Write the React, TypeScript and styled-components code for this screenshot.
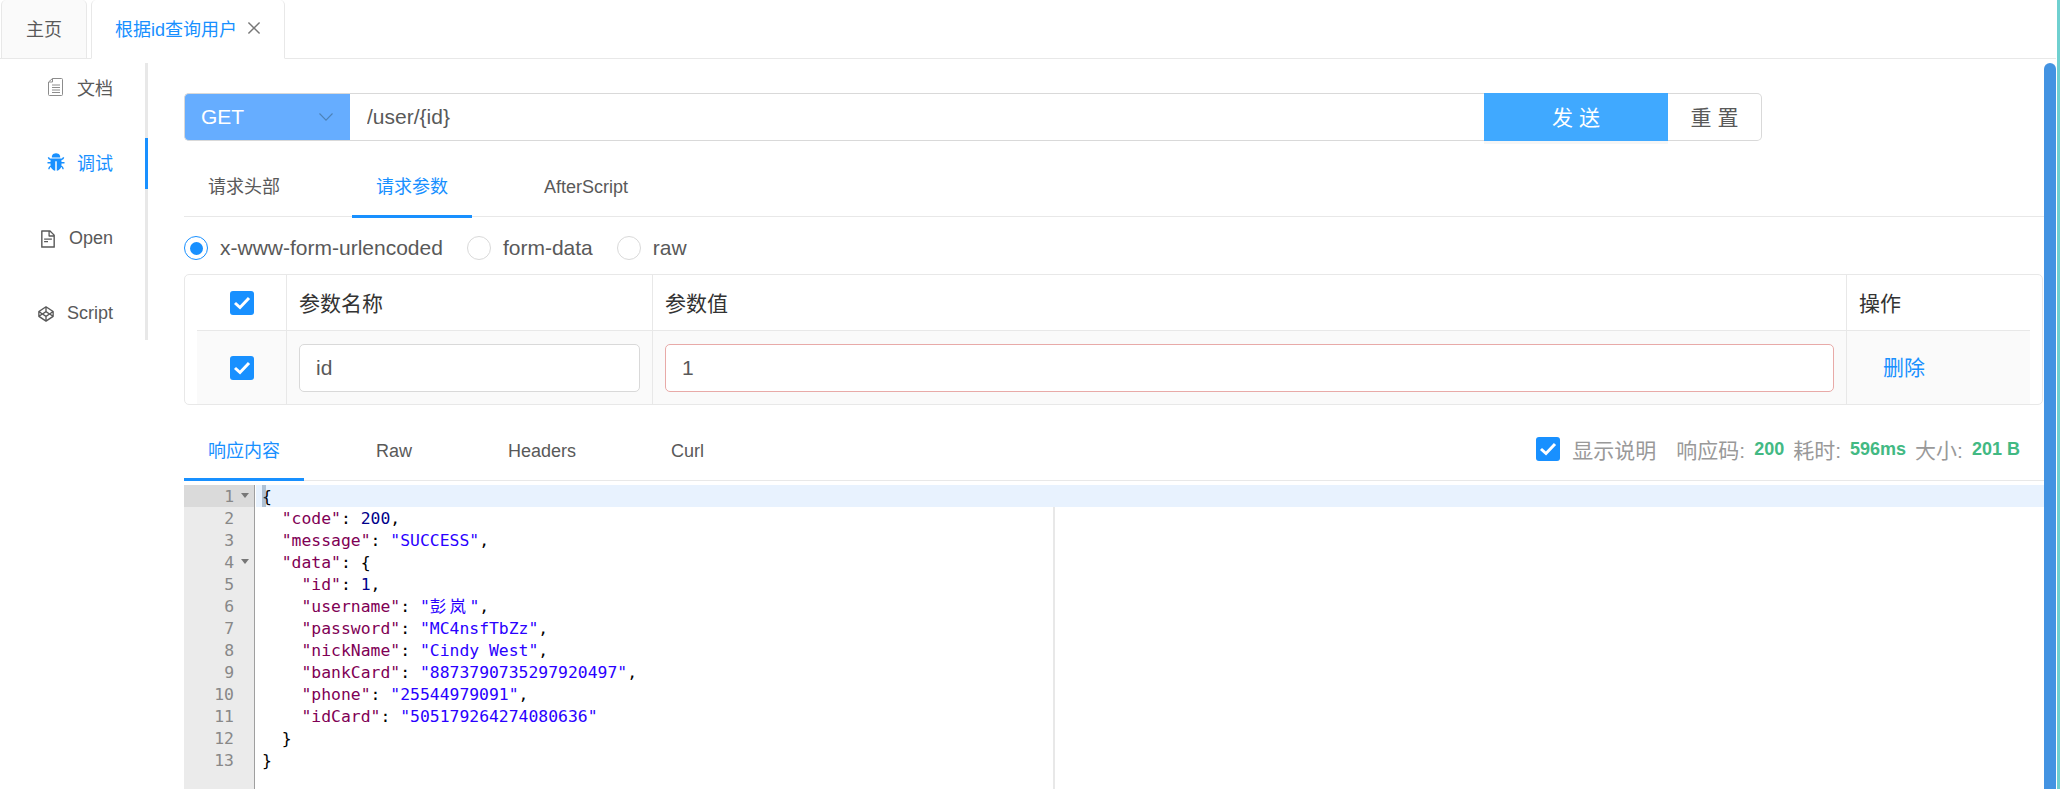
import React from 'react';
import styled, { createGlobalStyle } from 'styled-components';
import {
  AiFillBug, AiOutlineClose, AiOutlineCodepen, AiOutlineFileText,
} from 'react-icons/ai';

const GlobalStyle = createGlobalStyle`
  html, body {
    margin: 0;
    padding: 0;
    height: 100%;
    overflow: hidden;
    background: #fff;
  }
  * { box-sizing: border-box; }
  body {
    font-family: "Liberation Sans", Arial, "Noto Sans CJK SC", sans-serif;
    color: #595959;
  }
`;

const Frame = styled.div`
  display: flex;
  height: 789px;
  overflow: hidden;
`;

const EdgeStrip = styled.div`
  flex: none;
  width: 3px;
  margin-left: 1px;
  background: #6fd0d0;
`;

const Page = styled.div`
  display: flex;
  flex: 1;
  flex-direction: column;
  min-width: 0;
`;

const TabBar = styled.div`
  display: flex;
  flex: none;
  gap: 4px;
  height: 59px;
  padding-left: 1px;
  border-bottom: 1px solid #e8e8e8;
`;

const PageTab = styled.div<{ $active?: boolean }>`
  display: flex;
  align-items: center;
  gap: 8px;
  height: 59px;
  padding: ${(p) => (p.$active ? '0 21px 2px 23px' : '0 24px 2px 24px')};
  font-size: 18px;
  color: ${(p) => (p.$active ? '#1890ff' : '#595959')};
  background: ${(p) => (p.$active ? '#fff' : '#fafafa')};
  border: 1px solid #e8e8e8;
  border-top: 0;
  border-bottom-color: ${(p) => (p.$active ? '#fff' : '#e8e8e8')};
  border-radius: 5px 5px 0 0;
  svg { color: #777; font-size: 18px; }
`;

const Body = styled.div`
  display: flex;
  flex: 1;
  min-height: 0;
`;

const Sidebar = styled.nav`
  flex: none;
  align-self: flex-start;
  width: 148px;
  height: 277px;
  margin-top: 4px;
  margin-right: 36px;
  border-right: 3px solid #e8e8e8;
`;

const SideItem = styled.div<{ $active?: boolean; $lift?: number }>`
  display: flex;
  align-items: center;
  justify-content: flex-end;
  gap: 11px;
  height: 51px;
  margin: 0 -3px 24px 0;
  padding: 0 32px ${(p) => p.$lift ?? 0}px 0;
  font-size: 18px;
  color: ${(p) => (p.$active ? '#1890ff' : '#595959')};
  border-right: 3px solid ${(p) => (p.$active ? '#1890ff' : 'transparent')};
  svg { flex: none; font-size: 20px; }
`;

const DocGlyph = styled.svg`
  margin-right: 3px;
`;

const Main = styled.main`
  flex: 1;
  min-width: 0;
  padding-top: 34px;
`;

const UrlBar = styled.div`
  display: flex;
  height: 48px;
  width: 1578px;
`;

const MethodSelect = styled.div`
  display: flex;
  flex: none;
  align-items: center;
  justify-content: space-between;
  width: 166px;
  padding: 0 17px 0 16px;
  font-size: 21px;
  color: #fff;
  background: #66adff;
  border: 1px solid #d9d9d9;
  border-right: 0;
  border-radius: 5px 0 0 5px;
`;

const UrlInput = styled.input`
  flex: 1;
  min-width: 0;
  padding: 0 17px;
  font: inherit;
  font-size: 21px;
  color: #595959;
  border: 1px solid #d9d9d9;
  border-left: 0;
  border-right: 0;
  outline: none;
`;

const SendButton = styled.button`
  flex: none;
  width: 184px;
  padding: 0 0 2px;
  font: inherit;
  font-size: 21px;
  color: #fff;
  background: #40a9ff;
  border: 0;
  box-shadow: 0 3px 0 rgba(0, 0, 0, 0.035);
`;

const ResetButton = styled.button`
  flex: none;
  width: 94px;
  padding: 0 0 2px;
  font: inherit;
  font-size: 21px;
  color: #595959;
  background: #fff;
  border: 1px solid #d9d9d9;
  border-left: 0;
  border-radius: 0 5px 5px 0;
`;

const TabStrip = styled.div`
  display: flex;
  height: 76px;
  align-items: flex-end;
  border-bottom: 1px solid #e8e8e8;
`;

const StripTab = styled.div<{ $active?: boolean; $width: number; $pad?: number; $below?: number }>`
  flex: none;
  width: ${(p) => p.$width}px;
  margin-bottom: -2px;
  padding: 0 0 ${(p) => p.$below ?? 17}px ${(p) => p.$pad ?? 24}px;
  font-size: 18px;
  line-height: 22px;
  white-space: nowrap;
  color: ${(p) => (p.$active ? '#1890ff' : '#595959')};
  border-bottom: 3px solid ${(p) => (p.$active ? '#1890ff' : 'transparent')};
`;

const RadioRow = styled.div`
  display: flex;
  align-items: center;
  gap: 24px;
  height: 57px;
  padding-top: 5px;
  font-size: 21px;
`;

const RadioOption = styled.label`
  display: flex;
  align-items: center;
  gap: 12px;
`;

const RadioMark = styled.span<{ $checked?: boolean }>`
  display: flex;
  align-items: center;
  justify-content: center;
  width: 24px;
  height: 24px;
  background: #fff;
  border: 1px solid ${(p) => (p.$checked ? '#1890ff' : '#d9d9d9')};
  border-radius: 50%;
  &::after {
    content: '';
    display: ${(p) => (p.$checked ? 'block' : 'none')};
    width: 13px;
    height: 13px;
    background: #1890ff;
    border-radius: 50%;
  }
`;

const ParamTable = styled.div`
  width: 1859px;
  height: 131px;
  padding: 0 12px;
  border: 1px solid #e8e8e8;
  border-radius: 5px;
`;

const TableRow = styled.div<{ $body?: boolean }>`
  display: grid;
  grid-template-columns: 90px 366px 1194px 1fr;
  height: ${(p) => (p.$body ? '73px' : '56px')};
  background: ${(p) => (p.$body ? '#fafafa' : '#fff')};
  border-bottom: ${(p) => (p.$body ? '0' : '1px solid #e8e8e8')};
`;

const Cell = styled.div<{ $center?: boolean }>`
  display: flex;
  align-items: center;
  justify-content: ${(p) => (p.$center ? 'center' : 'flex-start')};
  padding: 0 ${(p) => (p.$center ? '0' : '12px')};
  font-size: 21px;
  color: #333;
  border-right: 1px solid #e8e8e8;
  &:last-child { border-right: 0; }
`;

const HeadCell = styled(Cell)`
  padding-bottom: 2px;
`;

const CheckMark = styled.span`
  display: flex;
  flex: none;
  width: 24px;
  height: 24px;
  background: #1890ff;
  border-radius: 3px;
  svg { display: block; }
`;

const ParamInput = styled.input<{ $error?: boolean }>`
  width: 100%;
  height: 48px;
  padding: 0 16px;
  font: inherit;
  font-size: 21px;
  color: #595959;
  background: #fff;
  border: 1px solid ${(p) => (p.$error ? '#e8aaa8' : '#d9d9d9')};
  border-radius: 5px;
  outline: none;
`;

const DeleteLink = styled.a`
  margin: 0 0 3px 24px;
  font-size: 21px;
  color: #1890ff;
`;

const ResponseHead = styled.div`
  display: flex;
  justify-content: space-between;
  height: 76px;
  align-items: flex-end;
  border-bottom: 1px solid #e8e8e8;
`;

const ResponseTabs = styled.div`
  display: flex;
  margin-bottom: 1px;
`;

const ResponseMeta = styled.div`
  display: flex;
  align-items: center;
  height: 24px;
  margin-bottom: 19px;
  padding-right: 24px;
  font-size: 21px;
  color: #999;
`;

const MetaNote = styled.span`
  margin: 0 20px 0 12px;
`;

const MetaValue = styled.b`
  margin: 0 9px;
  font-size: 18px;
  color: #42b983;
  &:last-child { margin-right: 0; }
`;

const Editor = styled.div`
  display: flex;
  height: 304px;
  margin-top: 4px;
  font-family: "DejaVu Sans Mono", "Noto Sans CJK SC", monospace;
  font-size: 16.4px;
  line-height: 24px;
`;

const Gutter = styled.div`
  flex: none;
  width: 71px;
  margin-right: 1px;
  color: #888;
  background: #ebebeb;
  border-right: 1px solid #9f9f9f;
`;

const GutterLine = styled.div<{ $active?: boolean }>`
  position: relative;
  height: 22px;
  padding-right: 20px;
  text-align: right;
  background: ${(p) => (p.$active ? '#dadada' : 'transparent')};
`;

const FoldArrow = styled.span`
  position: absolute;
  top: 8px;
  right: 5px;
  border-top: 5px solid #777;
  border-left: 4px solid transparent;
  border-right: 4px solid transparent;
`;

const Code = styled.div`
  position: relative;
  flex: 1;
  min-width: 0;
  white-space: pre;
  color: #000;
`;

const CodeLine = styled.div<{ $active?: boolean }>`
  position: relative;
  height: 22px;
  padding-left: 6px;
  background: ${(p) => (p.$active ? '#e8f2fe' : 'transparent')};
`;

const Cursor = styled.span`
  position: absolute;
  top: 0;
  left: 6px;
  width: 4px;
  height: 22px;
  background: rgba(90, 120, 150, 0.4);
`;

const PrintMargin = styled.div`
  position: absolute;
  top: 0;
  bottom: 0;
  left: 797px;
  width: 2px;
  background: #e8e8e8;
`;

const Key = styled.span`
  color: #7f0055;
`;

const Str = styled.span`
  color: #2a00ff;
`;

const WideStr = styled.span`
  letter-spacing: 3.4px;
`;

const Num = styled.span`
  color: #00008b;
`;

const ScrollTrack = styled.div`
  flex: none;
  width: 12px;
  margin-top: 4px;
  background: #4393e2;
  border-radius: 6px 6px 0 0;
`;

const Check = () => (
  <CheckMark>
    <svg width="24" height="24" viewBox="0 0 24 24" fill="none">
      <path d="M5 12l5 4.5L19 7" stroke="#fff" strokeWidth="3" />
    </svg>
  </CheckMark>
);

const DocIcon = () => (
  <DocGlyph width="15" height="18" viewBox="0 0 15 18" fill="none" stroke="#8c8c8c" strokeWidth="1">
    <path d="M4.5 .5h9a1 1 0 0 1 1 1v15a1 1 0 0 1-1 1h-12a1 1 0 0 1-1-1V4z" />
    <path d="M4.5 .5V4h-3.5M4 7h8M4 9.5h8M4 12h8M4 14.5h8" />
  </DocGlyph>
);

const Chevron = () => (
  <svg width="14" height="8" viewBox="0 0 14 8" fill="none" stroke="#4d82b8" strokeWidth="1.1">
    <path d="M.5 .5L7 7.2 13.5 .5" />
  </svg>
);

type Row = { key: string; indent: number; text?: string; value?: React.ReactNode; tail?: string };

const codeRows: Row[] = [
  { key: '', indent: 0, text: '{' },
  { key: '"code"', indent: 2, value: <Num>200</Num>, tail: ',' },
  { key: '"message"', indent: 2, value: <Str>"SUCCESS"</Str>, tail: ',' },
  { key: '"data"', indent: 2, text: '{' },
  { key: '"id"', indent: 4, value: <Num>1</Num>, tail: ',' },
  { key: '"username"', indent: 4, value: <Str>"<WideStr>彭岚</WideStr>"</Str>, tail: ',' },
  { key: '"password"', indent: 4, value: <Str>"MC4nsfTbZz"</Str>, tail: ',' },
  { key: '"nickName"', indent: 4, value: <Str>"Cindy West"</Str>, tail: ',' },
  { key: '"bankCard"', indent: 4, value: <Str>"8873790735297920497"</Str>, tail: ',' },
  { key: '"phone"', indent: 4, value: <Str>"25544979091"</Str>, tail: ',' },
  { key: '"idCard"', indent: 4, value: <Str>"505179264274080636"</Str> },
  { key: '', indent: 2, text: '}' },
  { key: '', indent: 0, text: '}' },
];

export default function App() {
  return (
    <Frame>
      <GlobalStyle />
      <Page>
        <TabBar>
          <PageTab>主页</PageTab>
          <PageTab $active>
            根据id查询用户
            <AiOutlineClose />
          </PageTab>
        </TabBar>
        <Body>
          <Sidebar>
            <SideItem $lift={3}>
              <DocIcon />
              文档
            </SideItem>
            <SideItem $active $lift={3}>
              <AiFillBug />
              调试
            </SideItem>
            <SideItem>
              <AiOutlineFileText />
              Open
            </SideItem>
            <SideItem>
              <AiOutlineCodepen />
              Script
            </SideItem>
          </Sidebar>
          <Main>
            <UrlBar>
              <MethodSelect>
                GET
                <Chevron />
              </MethodSelect>
              <UrlInput readOnly value="/user/{id}" />
              <SendButton>发 送</SendButton>
              <ResetButton>重 置</ResetButton>
            </UrlBar>
            <TabStrip>
              <StripTab $width={168}>请求头部</StripTab>
              <StripTab $width={120} $active>请求参数</StripTab>
              <StripTab $width={200} $pad={72}>AfterScript</StripTab>
            </TabStrip>
            <RadioRow>
              <RadioOption>
                <RadioMark $checked />
                x-www-form-urlencoded
              </RadioOption>
              <RadioOption>
                <RadioMark />
                form-data
              </RadioOption>
              <RadioOption>
                <RadioMark />
                raw
              </RadioOption>
            </RadioRow>
            <ParamTable>
              <TableRow>
                <Cell $center><Check /></Cell>
                <HeadCell>参数名称</HeadCell>
                <HeadCell>参数值</HeadCell>
                <HeadCell>操作</HeadCell>
              </TableRow>
              <TableRow $body>
                <Cell $center><Check /></Cell>
                <Cell><ParamInput readOnly value="id" /></Cell>
                <Cell><ParamInput readOnly $error value="1" /></Cell>
                <Cell><DeleteLink>删除</DeleteLink></Cell>
              </TableRow>
            </ParamTable>
            <ResponseHead>
              <ResponseTabs>
                <StripTab $width={120} $active $below={16}>响应内容</StripTab>
                <StripTab $width={192} $pad={72} $below={16}>Raw</StripTab>
                <StripTab $width={151} $pad={12} $below={16}>Headers</StripTab>
                <StripTab $width={100} $below={16}>Curl</StripTab>
              </ResponseTabs>
              <ResponseMeta>
                <Check />
                <MetaNote>显示说明</MetaNote>
                响应码:
                <MetaValue>200</MetaValue>
                耗时:
                <MetaValue>596ms</MetaValue>
                大小:
                <MetaValue>201 B</MetaValue>
              </ResponseMeta>
            </ResponseHead>
            <Editor>
              <Gutter>
                {codeRows.map((row, i) => (
                  <GutterLine key={i} $active={i === 0}>
                    {i + 1}
                    {(i === 0 || i === 3) && <FoldArrow />}
                  </GutterLine>
                ))}
              </Gutter>
              <Code>
                <PrintMargin />
                {codeRows.map((row, i) => (
                  <CodeLine key={i} $active={i === 0}>
                    {i === 0 && <Cursor />}
                    {' '.repeat(row.indent)}
                    {row.key && <Key>{row.key}</Key>}
                    {row.key && ': '}
                    {row.value}
                    {row.text}
                    {row.tail}
                  </CodeLine>
                ))}
              </Code>
            </Editor>
          </Main>
          <ScrollTrack />
        </Body>
      </Page>
      <EdgeStrip />
    </Frame>
  );
}
